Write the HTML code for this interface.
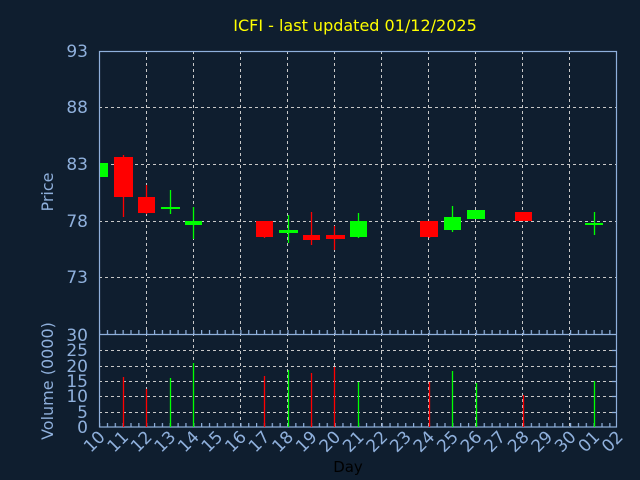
<!DOCTYPE html>
<html><head><style>html,body{margin:0;padding:0;background:#0f1e2f;}svg{display:block}</style></head><body>
<svg width="640" height="480" xmlns="http://www.w3.org/2000/svg" font-family="Liberation Sans, DejaVu Sans, sans-serif">
<defs>
<pattern id="tk" x="99" y="0" width="7.85" height="10" patternUnits="userSpaceOnUse">
<rect x="0" y="0" width="1.2" height="10" fill="#8fb0dc"/>
</pattern>
</defs>
<rect width="640" height="480" fill="#0f1e2f"/>
<text x="355" y="31" fill="#ffff00" font-size="16" text-anchor="middle" font-family="DejaVu Sans, sans-serif">ICFI - last updated 01/12/2025</text>
<g stroke="#c8c8c8" stroke-width="1" stroke-dasharray="3,3" fill="none">
<path d="M99 107.5H617M99 164.5H617M99 221.5H617M99 277.5H617"/>
<path d="M99 350.5H617M99 366.5H617M99 381.5H617M99 396.5H617M99 412.5H617"/>
<path d="M146.5 51V427M193.5 51V427M240.5 51V427M287.5 51V427M334.5 51V427M381.5 51V427M428.5 51V427M475.5 51V427M522.5 51V427M569.5 51V427"/>
</g>
<rect x="99" y="330" width="518" height="4" fill="url(#tk)"/>
<rect x="99" y="423" width="518" height="4" fill="url(#tk)"/>
<g stroke="#8fb0dc" fill="none" stroke-width="1.2">
<rect x="99.5" y="51.5" width="517" height="375.5"/>
<path d="M99 334.5H617"/>
<path d="M612 350.5H617M612 366.5H617M612 381.5H617M612 396.5H617M612 412.5H617"/>
</g>
<g fill="#8fb0dc" font-size="17" text-anchor="end" font-family="DejaVu Sans, sans-serif">
<text x="88" y="57">93</text><text x="88" y="113">88</text><text x="88" y="170">83</text><text x="88" y="227">78</text><text x="88" y="283">73</text>
<text x="88" y="341">30</text><text x="88" y="356">25</text><text x="88" y="372">20</text><text x="88" y="387">15</text><text x="88" y="402">10</text><text x="88" y="418">5</text><text x="88" y="433">0</text>
</g>
<text transform="translate(53,192) rotate(-90)" fill="#8fb0dc" font-size="16" text-anchor="middle" font-family="DejaVu Sans, sans-serif">Price</text>
<text transform="translate(53,381) rotate(-90)" fill="#8fb0dc" font-size="16" text-anchor="middle" font-family="DejaVu Sans, sans-serif">Volume (0000)</text>
<text x="348" y="472" fill="#000" font-size="15" text-anchor="middle" font-family="DejaVu Sans, sans-serif">Day</text>
<g fill="#8fb0dc" font-size="17" text-anchor="end" font-family="DejaVu Sans, sans-serif">
<text transform="translate(106,438) rotate(-45)">10</text>
<text transform="translate(129.5,438) rotate(-45)">11</text>
<text transform="translate(153,438) rotate(-45)">12</text>
<text transform="translate(176.6,438) rotate(-45)">13</text>
<text transform="translate(200.2,438) rotate(-45)">14</text>
<text transform="translate(223.7,438) rotate(-45)">15</text>
<text transform="translate(247.3,438) rotate(-45)">16</text>
<text transform="translate(270.8,438) rotate(-45)">17</text>
<text transform="translate(294.4,438) rotate(-45)">18</text>
<text transform="translate(318,438) rotate(-45)">19</text>
<text transform="translate(341.5,438) rotate(-45)">20</text>
<text transform="translate(365,438) rotate(-45)">21</text>
<text transform="translate(388.6,438) rotate(-45)">22</text>
<text transform="translate(412.2,438) rotate(-45)">23</text>
<text transform="translate(435.7,438) rotate(-45)">24</text>
<text transform="translate(459.3,438) rotate(-45)">25</text>
<text transform="translate(482.8,438) rotate(-45)">26</text>
<text transform="translate(506.4,438) rotate(-45)">27</text>
<text transform="translate(530,438) rotate(-45)">28</text>
<text transform="translate(553.5,438) rotate(-45)">29</text>
<text transform="translate(577,438) rotate(-45)">30</text>
<text transform="translate(600.6,438) rotate(-45)">01</text>
<text transform="translate(624,438) rotate(-45)">02</text>
</g>
<g stroke-width="1.3">
<path stroke="#ff0000" d="M123.5 155V217M146.5 185V214M264.5 221V238M311.5 212V245M334.5 226V250M429.5 221V238M523.5 212V221"/>
<path stroke="#00ff00" d="M170.5 190V214M193.5 207V239M288.5 215V243M358.5 213V238M452.5 206V232M476.5 210V219M594.5 212V235"/>
<path stroke="#ff0000" d="M123.5 377V427M146.5 389V427M264.5 376V427M311.5 373V427M334.5 367V427M429.5 382V427M523.5 395V427"/>
<path stroke="#00ff00" d="M170.5 378V427M193.5 363V427M288.5 370V427M358.5 382V427M452.5 371V427M476.5 383V427M594.5 381V427"/>
</g>
<g fill="#ff0000">
<rect x="114" y="157" width="19" height="40"/><rect x="138" y="197" width="17" height="16"/>
<rect x="256" y="221" width="17" height="16"/><rect x="303" y="235" width="17" height="5"/>
<rect x="326" y="235" width="19" height="4"/><rect x="420" y="221" width="18" height="16"/>
<rect x="515" y="212" width="17" height="9"/>
</g>
<g fill="#00ff00">
<rect x="100" y="163" width="8" height="14"/><rect x="161" y="207" width="19" height="2"/>
<rect x="185" y="221" width="17" height="4"/><rect x="279" y="230" width="19" height="3"/>
<rect x="350" y="221" width="17" height="16"/><rect x="444" y="217" width="17" height="13"/>
<rect x="467" y="210" width="18" height="9"/><rect x="585" y="223" width="18" height="2"/>
</g>
</svg>
</body></html>
